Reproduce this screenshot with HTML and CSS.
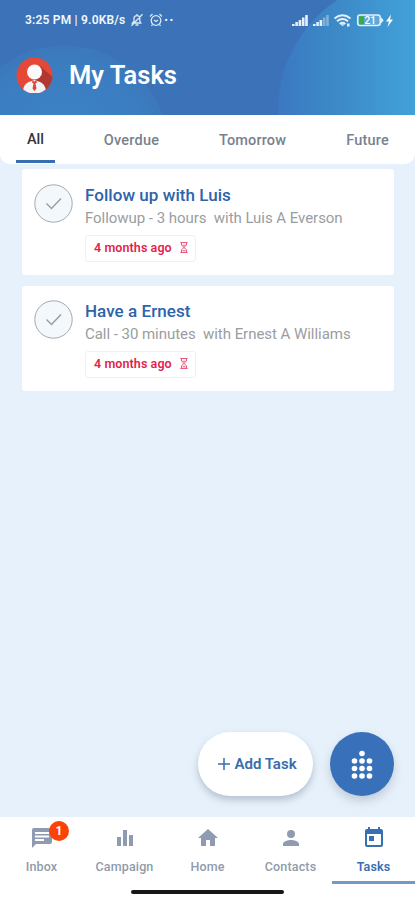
FILE: index.html
```html
<!DOCTYPE html>
<html lang="en">
<head>
<meta charset="utf-8">
<meta name="viewport" content="width=device-width">
<title>My Tasks</title>
<link rel="stylesheet" href="styles.css">
</head>
<body>
<div class="app">
  <header class="header">
    <div class="status">
      <span class="status-text">3:25 PM | 9.0KB/s</span>
      <svg class="mute" width="14" height="14" viewBox="0 0 14 14" fill="none" stroke="#dce9f7" stroke-width="1.3"><path d="M2.500 10h8.300l-1-1.800V5.500A2.900 2.900 0 0 0 4 5.500v2.700zM5.500 12h3M1.500 12.800 12.500 1.200M7 1v1.500"/></svg>
      <svg class="alarm" width="14" height="14" viewBox="0 0 14 14" fill="none" stroke="#dce9f7" stroke-width="1.3"><circle cx="7" cy="7.500" r="4.800"/><path d="M1 3.500 3.500 1M13 3.500 10.500 1M5 7l2 1.500L9 7M3.500 11.500 2.500 13M10.500 11.500l1 1.500"/></svg>
      <span class="dots">··</span>
      <svg class="signals" width="101" height="16" viewBox="0 0 101 16">
        <g fill="#e6f0fa"><path d="M0 12h2.600v2H0zM3.300 10h2.600v4H3.300zM6.600 8h2.600v6H6.600zM9.900 5.500h2.600V14H9.900zM13.200 3h2.600v11h-2.600zM21 12h2.600v2H21zM24.300 10h2.600v4h-2.600zM27.600 8h2.600v6h-2.600z"/><path opacity=".4" d="M30.900 5.500h2.600V14h-2.600zM34.200 3h2.600v11h-2.600z"/></g>
        <g fill="none" stroke="#e6f0fa" stroke-width="1.900"><path d="M42.500 6.500q8-6.500 16 0M45 9.300q5.500-4.500 11 0M47.700 11.900q2.800-2.300 5.600 0"/></g>
        <path d="m48.500 12.300 2 2 2-2zM55 11.500h2.500v3H55z" fill="#e6f0fa"/>
        <rect x="65.700" y="3" width="22.500" height="10.600" rx="2.500" fill="#62a8d6" stroke="#e3effa" stroke-width="1.500"/>
        <path d="M89 5.200 91.700 8.300 89 11.400z" fill="#e3effa"/><path d="M67 4.200h5v8.200h-5z" fill="#38ad45"/>
        <text x="72.500" y="11.600" class="battery">21</text>
        <path d="m99 2.500-5 7h3L95.500 15l5.500-7.500h-3z" fill="#fff"/>
      </svg>
    </div>
    <div class="heading">
      <svg class="avatar" width="37" height="37" viewBox="0 0 37 37">
        <defs><clipPath id="face"><circle cx="18.500" cy="18.500" r="18"/></clipPath></defs>
        <g clip-path="url(#face)"><path fill="#e64837" d="M0 0h37v37H0z"/><path fill="#b23730" d="m24 9 14 12v17H28L18 24z"/><path fill="#f2f3f5" d="M7 36c0-6 1.500-9 6-11l5.500-2 5.500 2c4 2 6 5 6 11z"/><circle cx="18.500" cy="15" r="7.500" fill="#fafafa"/><path fill="#dc4939" d="m16.500 23.500 2 1 2-1 .5 2-1.500 1 1 5-2 2.500-2-2.500 1-5-1.500-1z"/></g>
      </svg>
      <h1>My Tasks</h1>
    </div>
  </header>
  <nav class="tabs">
    <span class="tab active">All</span><span class="tab">Overdue</span><span class="tab">Tomorrow</span><span class="tab">Future</span>
  </nav>
  <main class="tasks">
    <article class="card">
      <svg class="check" width="39" height="39" viewBox="0 0 39 39" fill="none"><circle cx="19.500" cy="19.500" r="18.700" fill="#f3f8fc" stroke="#a3a9ae"/><path d="m12.500 19.500 5 5 9.500-10" stroke="#929da6" stroke-width="1.400"/></svg>
      <div class="info">
        <h2>Follow up with Luis</h2>
        <p>Followup - 3 hours&nbsp; with Luis A Everson</p>
        <div class="due"><span>4 months ago</span><svg width="8" height="11" viewBox="0 0 8 12" fill="none" stroke="#e5456a"><path d="M0 .6h8M0 11.400h8M1.300 1v2.500L4 6l2.700-2.500V1M1.300 11V8.500L4 6l2.700 2.500V11M2.500 3.500h3M2.500 9.500h3"/></svg></div>
      </div>
    </article>
    <article class="card">
      <svg class="check" width="39" height="39" viewBox="0 0 39 39" fill="none"><circle cx="19.500" cy="19.500" r="18.700" fill="#f3f8fc" stroke="#a3a9ae"/><path d="m12.500 19.500 5 5 9.500-10" stroke="#929da6" stroke-width="1.400"/></svg>
      <div class="info">
        <h2>Have a Ernest</h2>
        <p>Call - 30 minutes&nbsp; with Ernest A Williams</p>
        <div class="due"><span>4 months ago</span><svg width="8" height="11" viewBox="0 0 8 12" fill="none" stroke="#e5456a"><path d="M0 .6h8M0 11.400h8M1.300 1v2.500L4 6l2.700-2.500V1M1.300 11V8.500L4 6l2.700 2.500V11M2.500 3.500h3M2.500 9.500h3"/></svg></div>
      </div>
    </article>
  </main>
  <div class="actions">
    <button class="add"><svg width="12" height="12" viewBox="0 0 12 12" stroke="#386dad" stroke-width="1.500"><path d="M6 0v12M0 6h12"/></svg><span>Add Task</span></button>
    <button class="menu" aria-label="Menu"><svg width="22" height="30" viewBox="0 0 22 30" fill="#fff"><circle cx="11" cy="3.500" r="2.800"/><circle cx="3.500" cy="11" r="2.800"/><circle cx="11" cy="11" r="2.800"/><circle cx="18.500" cy="11" r="2.800"/><circle cx="3.500" cy="18.500" r="2.800"/><circle cx="11" cy="18.500" r="2.800"/><circle cx="18.500" cy="18.500" r="2.800"/><circle cx="3.500" cy="26" r="2.800"/><circle cx="11" cy="26" r="2.800"/><circle cx="18.500" cy="26" r="2.800"/></svg></button>
  </div>
  <footer class="bottom">
    <nav class="nav">
      <div class="item inbox"><svg width="24" height="24" viewBox="0 0 24 24"><path fill-rule="evenodd" d="M20 2H4c-1.100 0-2 .9-2 2v18l4-4h14c1.100 0 2-.9 2-2V4c0-1.100-.9-2-2-2zM5 6h14v2H5zm0 3.500h14v2H5zm0 3.500h9v2H5z"/></svg><span>Inbox</span><b class="badge">1</b></div>
      <div class="item"><svg width="24" height="24" viewBox="0 0 24 24"><path d="M4 11h4v9H4zm6-7h4v16h-4zm6 5h4v11h-4z"/></svg><span>Campaign</span></div>
      <div class="item"><svg width="24" height="24" viewBox="0 0 24 24"><path d="M10 20v-6h4v6h5v-8h3L12 3 2 12h3v8z"/></svg><span>Home</span></div>
      <div class="item"><svg width="24" height="24" viewBox="0 0 24 24"><path d="M12 12a4 4 0 1 0 0-8 4 4 0 0 0 0 8zm0 2c-2.700 0-8 1.300-8 4v2h16v-2c0-2.700-5.300-4-8-4z"/></svg><span>Contacts</span></div>
      <div class="item selected"><svg width="24" height="24" viewBox="0 0 24 24"><path fill-rule="evenodd" d="M19 3h-1V1h-2v2H8V1H6v2H5c-1.100 0-2 .9-2 2v14c0 1.100.9 2 2 2h14c1.100 0 2-.9 2-2V5c0-1.100-.9-2-2-2zm0 16H5V8h14zM7 10h5v5H7z"/></svg><span>Tasks</span></div>
    </nav>
    <div class="home-line"></div>
  </footer>
</div>
</body>
</html>
```
FILE: styles.css
```css
* { box-sizing: border-box; }
body { margin: 0; font-family: Roboto, "Liberation Sans", sans-serif; }
h1, h2, p { margin: 0; white-space: pre; }
svg { display: block; flex: none; }
button { border: 0; padding: 0; font: inherit; }

.app { width: 415px; height: 900px; display: flex; flex-direction: column; background: #e7f1fb; overflow: hidden; }
.header {
  height: 115px;
  flex: none;
  position: relative;
  isolation: isolate;
  overflow: hidden;
  background: radial-gradient(circle at 64px 150px, #3b85c7 0, #3b7dc0 85px, #3b78bc 104px, transparent 105px), #3b72b8;
}
.header::after {
  content: "";
  position: absolute;
  z-index: -1;
  left: 278px;
  top: -22px;
  width: 264px;
  height: 264px;
  border-radius: 50%;
  background: linear-gradient(90deg, #3b78c2, #3c8ac7 60px, #42a1d9 137px);
}
.status { height: 40px; padding: 0 22px 0 25px; display: flex; align-items: center; color: #f2f7fd; }
.status-text { font-size: 12px; font-weight: 600; letter-spacing: .2px; width: 105px; white-space: nowrap; }
.alarm { margin-left: 5px; }
.dots { font-size: 14px; font-weight: 700; margin-left: 1px; letter-spacing: 1px; }
.signals { margin-left: auto; }
.battery { font: 500 10px Roboto, sans-serif; fill: #fff; }
.heading { display: flex; align-items: center; padding-left: 16px; margin-top: 15px; height: 40px; }
h1 { font-size: 25.500px; line-height: 34px; font-weight: 600; color: #fff; margin-left: 16px; }

.tabs { height: 49px; flex: none; background: #fff; border-radius: 0 0 10px 10px; display: grid; grid-template-columns: 39px 56px 68px 44px; column-gap: 57px; padding: 0 0 1px 16px; color: #77828e; font-size: 14.500px; font-weight: 500; }
.tabs { grid-template-columns: 39px 57px 68px 44px; display: flex; column-gap: 0; }
.tab { flex: 0 0 auto; display: flex; align-items: center; justify-content: center; padding-top: 3px; white-space: nowrap; }
.tab:nth-child(2) { width: 57px; margin-left: 48px; }
.tab:nth-child(3) { width: 68px; margin-left: 58.500px; letter-spacing: .15px; }
.tab:nth-child(4) { width: 44px; margin-left: 59px; letter-spacing: .2px; }
.tab:nth-child(2) { letter-spacing: .2px; }
.tab.active { width: 39px; color: #30343a; border-bottom: 3px solid #396db2; }

.tasks { padding: 5px 21px 0 22px; display: flex; flex-direction: column; gap: 11px; }
.card { height: 105.500px; background: #fff; border-radius: 3px; padding: 15px 12px 0; display: flex; gap: 12px; }
.card + .card { padding-top: 14.500px; }
h2 { font-size: 17px; line-height: 22px; font-weight: 500; color: #2d63aa; letter-spacing: .05px; }
.card p { font-size: 15px; line-height: 20px; margin-top: 2px; color: #999da1; letter-spacing: -.04px; }
.due { width: 111px; height: 27px; margin-top: 7px; border: 1px solid #f0f1f2; border-radius: 3px; display: flex; align-items: center; padding: 0 0 2px 8px; gap: 8px; color: #e21f4b; font-size: 12.500px; letter-spacing: .08px; font-weight: 600; white-space: nowrap; }

.actions { margin-top: auto; padding: 0 21px 21px 0; display: flex; justify-content: flex-end; gap: 17px; }
.add { width: 115px; height: 64px; border-radius: 32px; background: #fff; color: #386dad; display: flex; align-items: center; justify-content: center; gap: 4px; padding-left: 4px; font-size: 15px; font-weight: 600; box-shadow: 0 4px 7px #8193a580; white-space: nowrap; }
.menu { width: 64px; height: 64px; border-radius: 50%; background: #3871b9; display: grid; place-items: center; padding-top: 2px; box-shadow: 0 5px 10px #8193a566; }

.bottom { height: 83px; flex: none; background: #fff; display: flex; flex-direction: column; align-items: center; }
.nav { width: 100%; height: 67px; display: grid; grid-template-columns: repeat(5, 83px); }
.item { position: relative; display: flex; flex-direction: column; align-items: center; padding-top: 9px; color: #909bab; fill: #8e9bb0; font-size: 12.500px; letter-spacing: .15px; font-weight: 500; }
.item span { line-height: 16px; margin-top: 9px; }
.selected { color: #386fb2; fill: #386fb2; border-bottom: 3px solid #7399c8; font-weight: 600; }
.badge { position: absolute; left: 49px; top: 4px; width: 20px; height: 20px; border-radius: 50%; background: #fa4305; color: #fff; font-size: 12px; line-height: 20px; text-align: center; }
.home-line { width: 153px; height: 4px; margin-top: 6px; border-radius: 2px; background: #171717; }
```
